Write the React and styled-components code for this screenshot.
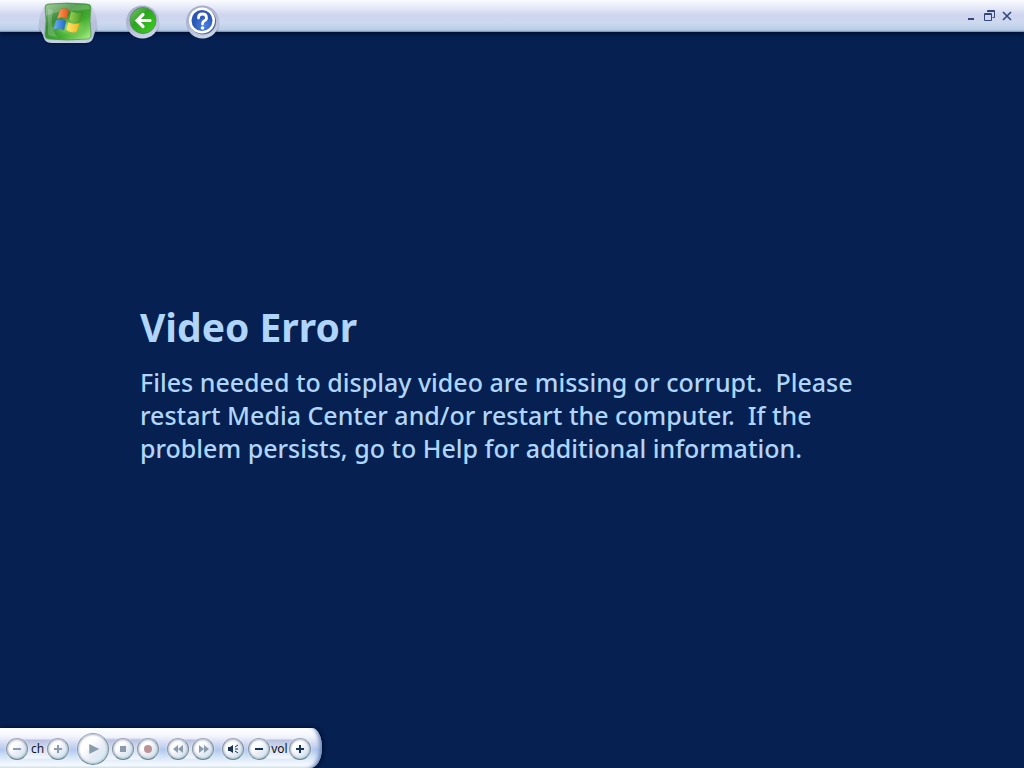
import React from 'react';
import styled, { createGlobalStyle } from 'styled-components';

const GlobalStyle = createGlobalStyle`
  * {
    box-sizing: border-box;
  }
  body {
    margin: 0;
    background: #052051;
    font-family: 'Noto Sans', 'Open Sans', sans-serif;
  }
`;

const Screen = styled.div`
  display: flex;
  flex-direction: column;
  min-height: 100vh;
  overflow: hidden;
`;

const TopBar = styled.header`
  display: flex;
  align-items: flex-start;
  height: 32px;
  padding: 0 9px 0 36px;
  background: linear-gradient(
    #fbfcff 0,
    #e4e8f7 8px,
    #d0d4ee 15px,
    #cbd9ee 23px,
    #b9cee6 30px,
    #7189b0 32px
  );
  box-shadow: 0 1px 5px #000b2a;
`;

const IconButton = styled.button`
  display: flex;
  flex: none;
  padding: 0;
  border: 0;
  background: none;
  cursor: pointer;
`;

const NavButtons = styled.nav`
  display: flex;
  gap: 24px;
`;

const WindowButtons = styled.div`
  display: flex;
  gap: 2px;
  margin-left: auto;
  padding-top: 8px;
`;

const Message = styled.main`
  display: flex;
  flex: 1;
  flex-direction: column;
  justify-content: center;
  padding: 7px 140px 0;
  color: #b0d5fb;
`;

const Title = styled.h1`
  margin: 0;
  font-size: 39px;
  font-weight: 700;
  line-height: 48px;
`;

const Description = styled.p`
  max-width: 720px;
  margin: 15px 0 0;
  font-size: 25px;
  font-weight: 500;
  line-height: 33px;
  white-space: pre-wrap;
`;

const Dock = styled.footer`
  display: flex;
  align-items: center;
  align-self: flex-start;
  gap: 8px;
  height: 40px;
  padding: 1px 11px 0 6px;
  border-radius: 0 10px 12px 0 / 0 20px 20px 0;
  background: linear-gradient(
    #ffffff 0,
    #f4f6fd 8px,
    #d5dcf2 15px,
    #b1c8ee 22px,
    #d5e4f8 29px,
    #f6fafe 37px,
    #e5edf5 40px
  );
  box-shadow: inset -5px -1px 4px -3px #6280b4, 1px 0 4px #000b2a;
`;

const Group = styled.div`
  display: flex;
  align-items: center;
  gap: ${props => props.$gap || 0}px;
  border-radius: 11px;
  background: linear-gradient(
    transparent 1px,
    #b9c0df 2px,
    #d2dbf1 10px,
    #f3f8ff 20px,
    transparent 21px
  );
`;

const PlayGroup = styled(Group)`
  border-radius: 16px;
  background: linear-gradient(
    transparent 5px,
    #bac2e0 7px,
    #d2dbf1 16px,
    #f3f8ff 26px,
    transparent 27px
  );
`;

const VolumeArea = styled.div`
  display: flex;
  gap: 4px;
`;

const RoundButton = styled.button`
  display: flex;
  align-items: center;
  justify-content: center;
  width: ${props => (props.$large ? 32 : 22)}px;
  height: ${props => (props.$large ? 32 : 22)}px;
  padding: 0;
  border: 1px solid;
  border-color: #a1a6b8 #7b929c #668791 #8c97a8;
  border-radius: 50%;
  background: linear-gradient(135deg, #ffffff 35%, #e8ecf6 60%, #c6e8f2);
  box-shadow: inset 0 0 2px 1px #b0bcc9, 0 0 2px #eef2fb;
  color: ${props => (props.$active ? '#173454' : '#8a9cab')};
  cursor: pointer;
`;

const ControlLabel = styled.span`
  width: 19px;
  color: #10131c;
  font-size: 12px;
  line-height: 20px;
  text-align: center;
`;

const GLYPHS = {
  minus: <path d="M4 8h8" stroke="currentColor" strokeWidth="2" />,
  plus: <path d="M4 8h8M8 4v8" stroke="currentColor" strokeWidth="2" />,
  play: <path d="M5 4v8l8-4z" fill="currentColor" />,
  stop: <path d="M5 5h6v6H5z" fill="currentColor" />,
  record: <circle cx="8" cy="8" r="4" fill="#bd9295" />,
  rewind: <path d="M8 4v8L3 8zM13 4v8L8 8z" fill="currentColor" />,
  forward: <path d="M4 4v8l5-4zM9 4v8l5-4z" fill="currentColor" />,
  mute: (
    <>
      <path d="M3 6h2l3-2v8l-3-2H3z" fill="currentColor" />
      <path d="M10 6l3-2M10 8h3M10 10l3 2" stroke="currentColor" />
    </>
  ),
};

const Control = ({ glyph, label, large, active }) => (
  <RoundButton type="button" aria-label={label} $large={large} $active={active}>
    <svg width={large ? 20 : 16} height={large ? 20 : 16} viewBox="0 0 16 16" fill="none">
      {GLYPHS[glyph]}
    </svg>
  </RoundButton>
);

const StartIcon = () => (
  <svg width="64" height="46" viewBox="0 0 64 46">
    <defs>
      <linearGradient id="startShade" x1="0" y1="0" x2="0" y2="1">
        <stop offset=".5" stopColor="#071636" stopOpacity="0" />
        <stop offset="1" stopColor="#071636" stopOpacity=".5" />
      </linearGradient>
      <linearGradient id="startRim" x1="0" y1="0" x2="0" y2="1">
        <stop stopColor="#dfe3f3" stopOpacity="0" />
        <stop offset=".25" stopColor="#c9cee5" />
        <stop offset=".5" stopColor="#b9bfda" />
        <stop offset=".85" stopColor="#b4bfd8" />
        <stop offset="1" stopColor="#c9d5e6" />
      </linearGradient>
      <linearGradient id="startGreen" x1="0" y1="0" x2="1" y2="1">
        <stop stopColor="#8ebd86" />
        <stop offset=".35" stopColor="#368c35" />
        <stop offset=".65" stopColor="#42ad2d" />
        <stop offset="1" stopColor="#b3f58d" />
      </linearGradient>
      <radialGradient id="startGlow">
        <stop stopColor="#b8f59b" />
        <stop offset="1" stopColor="#54b73b" stopOpacity="0" />
      </radialGradient>
      <linearGradient id="flagRed"><stop stopColor="#ffa35a" /><stop offset="1" stopColor="#e44d1e" /></linearGradient>
      <linearGradient id="flagBlue"><stop stopColor="#70b6f6" /><stop offset="1" stopColor="#2467c7" /></linearGradient>
      <linearGradient id="flagGreen"><stop stopColor="#9bd354" /><stop offset="1" stopColor="#419420" /></linearGradient>
      <linearGradient id="flagYellow"><stop stopColor="#ffe96b" /><stop offset="1" stopColor="#eeb51f" /></linearGradient>
    </defs>
    <path d="M8 2h48c2 7 6 14 6 22 0 5-2 8-3 12-1 5-3 9-10 9H16c-7 0-9-4-10-9-2-4-4-7-4-12 0-8 4-15 6-22z" fill="url(#startShade)" />
    <path d="M9 2h46c2 7 6 13 6 21 0 5-2 8-3 12-1 5-3 8-9 8H16c-6 0-8-3-9-8-2-4-4-7-4-12 0-8 4-14 6-21z" fill="url(#startRim)" />
    <path d="M12 4Q31 2 51 4q4 0 4 4-2 13 0 26 0 5-4 5-20 2-38 0-4 0-4-5 2-13 0-26 0-4 3-4z" fill="url(#startGreen)" stroke="#4a9549" strokeOpacity=".7" />
    <ellipse cx="34" cy="27" rx="20" ry="12" fill="url(#startGlow)" />
    <path d="M12 5Q31 3 51 5q3 0 3 4-12 2-22 2T10 16V9q0-4 2-4z" fill="#fff" opacity=".2" />
    <path d="M12 9v23q0 4 3 4l6 1q-8-10-4-27z" fill="#fff" opacity=".2" />
    <g stroke="#28712a" strokeOpacity=".4" strokeWidth=".5">
      <path d="M24 9q5-2 9 1l-2 9q-5-3-10 0z" fill="url(#flagRed)" />
      <path d="M20 20q5-2 10 1l-2 9q-5-3-11 0z" fill="url(#flagBlue)" />
      <path d="M35 11q6 3 12 1l-3 10q-6 2-11-2z" fill="url(#flagGreen)" />
      <path d="M32 22q6 3 12 1l-3 9q-6 2-11-2z" fill="url(#flagYellow)" />
    </g>
  </svg>
);

const BackIcon = () => (
  <svg width="36" height="42" viewBox="0 0 36 42">
    <defs>
      <radialGradient id="roundShade">
        <stop offset=".8" stopColor="#061a42" stopOpacity=".4" />
        <stop offset="1" stopColor="#061a42" stopOpacity="0" />
      </radialGradient>
      <linearGradient id="roundRim" x1=".3" y1="0" x2=".7" y2="1">
        <stop stopColor="#a6acca" />
        <stop offset=".5" stopColor="#b1b9d5" />
        <stop offset="1" stopColor="#ccd8e8" />
      </linearGradient>
      <linearGradient id="backGreen" x1="0" y1="0" x2="1" y2="1">
        <stop stopColor="#8bc47c" />
        <stop offset=".4" stopColor="#2ba421" />
        <stop offset="1" stopColor="#3ed31b" />
      </linearGradient>
    </defs>
    <circle cx="19" cy="24" r="17" fill="url(#roundShade)" />
    <circle cx="18.500" cy="22" r="16.500" fill="url(#roundRim)" />
    <circle cx="19" cy="20.500" r="13" fill="url(#backGreen)" stroke="#54915c" />
    <path d="M26 20.500H13M19 14.500l-6 6 6 6" fill="none" stroke="#fff" strokeWidth="3.200" strokeLinecap="round" />
  </svg>
);

const HelpIcon = () => (
  <svg width="36" height="42" viewBox="0 0 36 42">
    <defs>
      <radialGradient id="helpBlue" cx=".6" cy=".75">
        <stop stopColor="#4b83e8" />
        <stop offset="1" stopColor="#2a56b5" />
      </radialGradient>
    </defs>
    <circle cx="19" cy="24" r="17" fill="url(#roundShade)" />
    <circle cx="18.500" cy="22" r="16.500" fill="url(#roundRim)" />
    <circle cx="19" cy="21.500" r="13" fill="#53658f" />
    <circle cx="18" cy="20.500" r="13" fill="#fff" />
    <circle cx="18" cy="20.500" r="10.500" fill="url(#helpBlue)" />
    <path d="M14.500 18q0-4 4-4 4 0 4 4 0 2-2.500 3-1.500 1-1.500 3" fill="none" stroke="#fff" strokeWidth="2.800" strokeLinecap="round" />
    <circle cx="18.500" cy="28" r="1.800" fill="#fff" />
  </svg>
);

const WINDOW_ACTIONS = [
  { label: 'Minimize', icon: <path d="M5 11h6" strokeWidth="2" /> },
  {
    label: 'Restore',
    icon: <path d="M3.500 5.500h7v7h-7zM3.500 6.500h7M6.500 4V2.500h7v7h-2M6.500 3.500h7" />,
  },
  { label: 'Close', icon: <path d="M4 4l8 8M12 4l-8 8" strokeWidth="1.600" /> },
];

const App = () => (
  <>
    <GlobalStyle />
    <Screen>
      <TopBar>
        <NavButtons>
          <IconButton type="button" aria-label="Start">
            <StartIcon />
          </IconButton>
          <IconButton type="button" aria-label="Back">
            <BackIcon />
          </IconButton>
          <IconButton type="button" aria-label="Help">
            <HelpIcon />
          </IconButton>
        </NavButtons>
        <WindowButtons>
          {WINDOW_ACTIONS.map(action => (
            <IconButton key={action.label} type="button" aria-label={action.label}>
              <svg width="16" height="16" viewBox="0 0 16 16" fill="none" stroke="#34477b">
                {action.icon}
              </svg>
            </IconButton>
          ))}
        </WindowButtons>
      </TopBar>
      <Message>
        <Title>Video Error</Title>
        <Description>
          {'Files needed to display video are missing or corrupt.  Please restart Media Center and/or restart the computer.  If the problem persists, go to Help for additional information.'}
        </Description>
      </Message>
      <Dock>
        <Group>
          <Control glyph="minus" label="Channel down" />
          <ControlLabel>ch</ControlLabel>
          <Control glyph="plus" label="Channel up" />
        </Group>
        <PlayGroup $gap={3}>
          <Control glyph="play" label="Play" large />
          <Control glyph="stop" label="Stop" />
          <Control glyph="record" label="Record" />
        </PlayGroup>
        <Group $gap={3}>
          <Control glyph="rewind" label="Rewind" />
          <Control glyph="forward" label="Fast forward" />
        </Group>
        <VolumeArea>
          <Control glyph="mute" label="Mute" active />
          <Group>
            <Control glyph="minus" label="Volume down" active />
            <ControlLabel>vol</ControlLabel>
            <Control glyph="plus" label="Volume up" active />
          </Group>
        </VolumeArea>
      </Dock>
    </Screen>
  </>
);

export default App;
